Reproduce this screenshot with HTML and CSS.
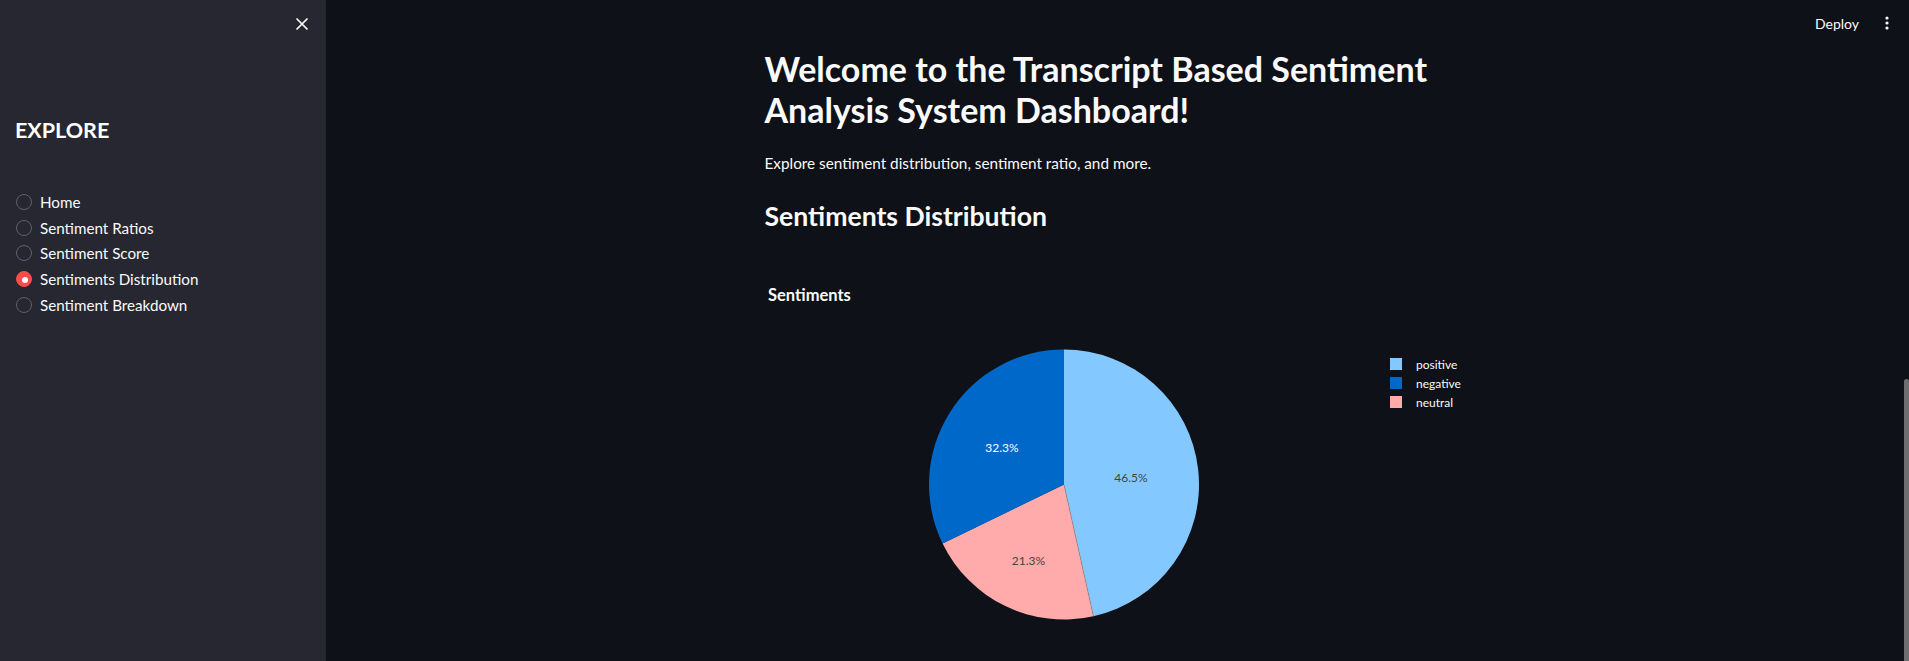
FILE: index.html
```html
<!DOCTYPE html>
<html lang="en">
<head>
  <meta charset="UTF-8">
  <meta name="viewport" content="width=device-width, initial-scale=1.0">
  <title>Sentiment Dashboard</title>
  <link rel="stylesheet" href="styles.css">
</head>
<body>
  <div class="app">
    <aside class="sidebar">
      <div class="side-top">
        <button class="close-btn" aria-label="Close sidebar">
          <svg width="14" height="14" viewBox="0 0 14 14"><path d="M1.5 1.5 L12.5 12.5 M12.5 1.5 L1.5 12.5" stroke="#fafafa" stroke-width="1.7" fill="none"/></svg>
        </button>
      </div>
      <h2 class="side-title">EXPLORE</h2>
      <div class="radios">
        <label class="radio"><span class="dot"></span>Home</label>
        <label class="radio"><span class="dot"></span>Sentiment Ratios</label>
        <label class="radio"><span class="dot"></span>Sentiment Score</label>
        <label class="radio"><span class="dot checked"></span>Sentiments Distribution</label>
        <label class="radio"><span class="dot"></span>Sentiment Breakdown</label>
      </div>
    </aside>

    <div class="main">
      <header class="topbar">
        <span class="deploy">Deploy</span>
        <span class="kebab">
          <svg width="4" height="14" viewBox="0 0 4 14"><circle cx="2" cy="2" r="1.6" fill="#fafafa"/><circle cx="2" cy="7" r="1.6" fill="#fafafa"/><circle cx="2" cy="12" r="1.6" fill="#fafafa"/></svg>
        </span>
      </header>

      <div class="block">
        <h1>Welcome to the Transcript Based Sentiment Analysis System Dashboard!</h1>
        <p class="lead">Explore sentiment distribution, sentiment ratio, and more.</p>
        <h2 class="section">Sentiments Distribution</h2>

        <div class="chart">
          <svg width="706" height="420" viewBox="0 0 706 420">
            <text x="3" y="41" class="chart-title">Sentiments</text>
            <!-- slices clockwise from 12 o'clock -->
            <path d="M299,224.5 L299,89.5 A135,135 0 0 1 328.45,356.25 Z" fill="#83c9ff"/>
            <path d="M299,224.5 L328.45,356.25 A135,135 0 0 1 177.58,283.51 Z" fill="#ffabab"/>
            <path d="M299,224.5 L177.58,283.51 A135,135 0 0 1 299,89.5 Z" fill="#0068c9"/>
            <line x1="299" y1="224.5" x2="328.45" y2="356.25" stroke="#8a8a8a" stroke-width="0.6"/>
            <text x="237" y="191.5" class="pie-label light">32.3%</text>
            <text x="366" y="222" class="pie-label">46.5%</text>
            <text x="263.5" y="304.5" class="pie-label">21.3%</text>

            <rect x="625" y="98" width="12" height="12" fill="#83c9ff"/>
            <text x="651" y="109" class="legend">positive</text>
            <rect x="625" y="117" width="12" height="12" fill="#0068c9"/>
            <text x="651" y="128" class="legend">negative</text>
            <rect x="625" y="136" width="12" height="12" fill="#ffabab"/>
            <text x="651" y="147" class="legend">neutral</text>
          </svg>
        </div>
      </div>

      <div class="scroll-thumb"></div>
    </div>
  </div>
</body>
</html>
```

FILE: styles.css
```css
html, body {
  margin: 0;
  height: 100%;
  overflow: hidden;
}
body {
  background: #0e1117;
  color: #fafafa;
  font-family: "Lato", "Liberation Sans", sans-serif;
}
.app {
  display: flex;
  height: 100%;
}
.sidebar {
  width: 326px;
  flex: none;
  background: #262730;
  box-sizing: border-box;
  padding: 0 0 0 15px;
}
.side-top {
  height: 47px;
  display: flex;
  justify-content: flex-end;
  align-items: center;
  padding-right: 17px;
}
.close-btn {
  background: none;
  border: 0;
  padding: 0;
  width: 14px;
  height: 14px;
  cursor: pointer;
}
.close-btn svg {
  display: block;
}
.side-title {
  margin: 67.7px 0 0;
  font-size: 21.5px;
  font-weight: 700;
  line-height: 30px;
  color: #fff;
}
.radios {
  margin-top: 44.5px;
  display: flex;
  flex-direction: column;
}
.radio {
  display: flex;
  align-items: center;
  gap: 8px;
  height: 25.7px;
  padding-left: 1px;
  font-size: 15.2px;
  cursor: pointer;
}
.dot {
  width: 14px;
  height: 14px;
  border-radius: 50%;
  border: 1px solid #5f6068;
  box-sizing: content-box;
  flex: none;
}
.dot.checked {
  background: #ff4b4b;
  border-color: #ff4b4b;
  position: relative;
}
.dot.checked::after {
  content: "";
  position: absolute;
  left: 4.5px;
  top: 4.5px;
  width: 6px;
  height: 6px;
  border-radius: 50%;
  background: #fff;
}
.main {
  flex: 1;
  position: relative;
  display: flex;
  flex-direction: column;
}
.topbar {
  flex: none;
  height: 46px;
  display: flex;
  justify-content: flex-end;
  align-items: center;
  gap: 26px;
  padding-right: 20px;
  font-size: 14px;
}
.kebab svg {
  display: block;
}
.block {
  flex: none;
  width: 706px;
  margin: 0 auto;
}
h1 {
  margin: 2.3px 0 0;
  font-size: 34px;
  font-weight: 700;
  line-height: 41px;
}
.lead {
  margin: 20.8px 0 0;
  font-size: 15.3px;
  line-height: 24px;
}
.section {
  margin: 22.6px 0 0;
  font-size: 26.6px;
  font-weight: 700;
  line-height: 36px;
}
.chart {
  margin-top: 26.3px;
}
.chart svg {
  display: block;
}
.chart-title {
  font-size: 16.5px;
  font-weight: 700;
  fill: #fafafa;
}
.pie-label {
  font-size: 12px;
  fill: #444;
  text-anchor: middle;
}
.pie-label.light {
  fill: #fff;
}
.legend {
  font-size: 12px;
  fill: #fafafa;
}
.scroll-thumb {
  position: absolute;
  right: 0;
  top: 379px;
  bottom: 0;
  width: 5px;
  background: #6e6e70;
  border-radius: 3px 3px 0 0;
}
```
